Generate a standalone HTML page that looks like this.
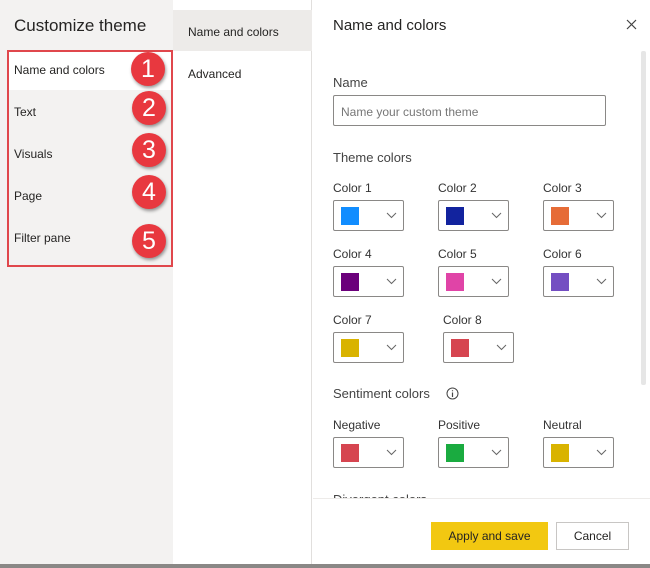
<!DOCTYPE html>
<html><head><style>
*{margin:0;padding:0;box-sizing:border-box}
body{width:650px;height:568px;overflow:hidden;font-family:"Liberation Sans",sans-serif;color:#252423;background:#fff;position:relative}
.a{position:absolute}
.left{left:0;top:0;width:173px;height:568px;background:#f3f2f1}
.mid{left:173px;top:0;width:139px;height:568px;background:#fff;border-right:1px solid #e1dfdd}
.t{font-size:12px}
.circ{width:34px;height:34px;border-radius:50%;background:#e8383f;color:#fff;font-size:25px;text-align:center;line-height:34px;box-shadow:1px 2px 3px rgba(0,0,0,.4)}
.lbl{font-size:12px;color:#333}
.dd{width:71px;height:31px;border:1px solid #8a8886;border-radius:2px;background:#fff}
.dd .sw{position:absolute;left:7px;top:6px;width:18px;height:18px}
.dd svg{position:absolute;left:52px;top:11px}
</style></head><body>
<div class="a left"></div>
<div class="a mid"></div>
<div class="a" style="left:14px;top:16px;font-size:17px">Customize theme</div>
<div class="a" style="left:8px;top:50px;width:164px;height:40px;background:#fff"></div>
<div class="a" style="left:7px;top:50px;width:166px;height:217px;border:2px solid #e0474c"></div>
<div class="a t" style="left:14px;top:63px">Name and colors</div>
<div class="a t" style="left:14px;top:105px">Text</div>
<div class="a t" style="left:14px;top:147px">Visuals</div>
<div class="a t" style="left:14px;top:189px">Page</div>
<div class="a t" style="left:14px;top:231px">Filter pane</div>
<div class="a circ" style="left:131px;top:52px">1</div>
<div class="a circ" style="left:132px;top:91px">2</div>
<div class="a circ" style="left:132px;top:133px">3</div>
<div class="a circ" style="left:132px;top:175px">4</div>
<div class="a circ" style="left:132px;top:224px">5</div>
<div class="a" style="left:173px;top:10px;width:139px;height:41px;background:#edebe9"></div>
<div class="a t" style="left:188px;top:25px">Name and colors</div>
<div class="a t" style="left:188px;top:67px">Advanced</div>
<div class="a" style="left:333px;top:17px;font-size:15px">Name and colors</div>
<svg class="a" style="left:626px;top:19px" width="11" height="11"><path d="M1 1L10 10M10 1L1 10" stroke="#444" stroke-width="1.2"/></svg>
<div class="a" style="left:641px;top:51px;width:5px;height:334px;background:#e6e6e6;border-radius:2px"></div>
<div class="a" style="left:333px;top:75px;font-size:13px;color:#444">Name</div>
<div class="a" style="left:333px;top:95px;width:273px;height:31px;border:1px solid #8a8886;border-radius:2px;font-size:12px;color:#777;padding:9px 7px">Name your custom theme</div>
<div class="a" style="left:333px;top:150px;font-size:13px;color:#444">Theme colors</div>
<div id="g"></div>
<div class="a" style="left:333px;top:386px;font-size:13px;color:#444">Sentiment colors</div>
<svg class="a" style="left:446px;top:387px" width="13" height="13"><circle cx="6.5" cy="6.5" r="5.5" fill="none" stroke="#444"/><path d="M6.5 5.5V10M6.5 3.3V4.3" stroke="#444" stroke-width="1.2"/></svg>
<div class="a" style="left:333px;top:492px;font-size:13px;color:#444;height:6px;overflow:hidden">Divergent colors</div>
<div class="a" style="left:313px;top:498px;width:337px;height:1px;background:#edebe9"></div>
<div class="a" style="left:431px;top:522px;width:117px;height:28px;background:#f2c811;font-size:12px;text-align:center;line-height:28px">Apply and save</div>
<div class="a" style="left:556px;top:522px;width:73px;height:28px;border:1px solid #c8c6c4;font-size:12px;text-align:center;line-height:26px">Cancel</div>
<div class="a" style="left:0;top:564px;width:650px;height:4px;background:#8a8886"></div>
<script>
var items=[["Color 1",333,187,"#118dff"],["Color 2",438,187,"#12239e"],["Color 3",543,187,"#e66c37"],
["Color 4",333,253,"#6b007b"],["Color 5",438,253,"#e044a7"],["Color 6",543,253,"#744ec2"],
["Color 7",333,319,"#d9b300"],["Color 8",443,319,"#d64550"],
["Negative",333,424,"#d64550"],["Positive",438,424,"#1aab40"],["Neutral",543,424,"#d9b300"]];
var h="";items.forEach(function(i){h+='<div class="a lbl" style="left:'+i[1]+'px;top:'+(i[2]-6)+'px">'+i[0]+'</div><div class="a dd" style="left:'+i[1]+'px;top:'+(i[2]+13)+'px"><div class="sw" style="background:'+i[3]+'"></div><svg width="11" height="7"><path d="M1 1L5.5 5.5L10 1" fill="none" stroke="#666"/></svg></div>';});
document.getElementById("g").outerHTML=h;
</script>
</body></html>
